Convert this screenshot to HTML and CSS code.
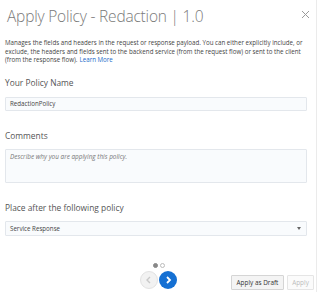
FILE: index.html
```html
<!DOCTYPE html>
<html lang="en">
<head>
  <meta charset="UTF-8" />
  <title>Apply Policy - Redaction</title>
  <link rel="stylesheet" href="styles.css">
</head>
<body>
  <div class="dialog">
    <div class="header">
      <h2>Apply Policy - Redaction | 1.0</h2>
      <svg class="close" width="9" height="9" viewBox="0 0 9 9"><path d="M1 1 L8 8 M8 1 L1 8" stroke="#9a9a9a" stroke-width="1"/></svg>
    </div>
    <p class="desc">Manages the fields and headers in the request or response payload. You can either explicitly include, or exclude, the headers and fields sent to the backend service (from the request flow) or sent to the client (from the response flow).<a href="#">Learn More</a></p>

    <div class="form-group first">
      <label>Your Policy Name</label>
      <div class="field">RedactionPolicy</div>
    </div>

    <div class="form-group">
      <label>Comments</label>
      <div class="field area">Describe why you are applying this policy.</div>
    </div>

    <div class="form-group">
      <label>Place after the following policy</label>
      <div class="field select">
        <span>Service Response</span>
        <span class="caret"></span>
      </div>
    </div>

    <div class="footer">
      <div class="pager">
        <div class="dots"><span class="dot on"></span><span class="dot"></span></div>
        <div class="arrows">
          <span class="nav prev">
            <svg width="8" height="8" viewBox="0 0 8 8"><path d="M5 1 L2 4 L5 7" fill="none" stroke="#c8c8c8" stroke-width="1.4"/></svg>
          </span>
          <span class="nav next">
            <svg width="8" height="8" viewBox="0 0 8 8"><path d="M3 1 L6 4 L3 7" fill="none" stroke="#fff" stroke-width="1.8"/></svg>
          </span>
        </div>
      </div>
      <div class="actions">
        <button class="button draft">Apply as Draft</button>
        <button class="button disabled">Apply</button>
      </div>
    </div>
  </div>
</body>
</html>
```

FILE: styles.css
```css
body {
  margin: 0;
  background-color: #fff;
  font-family: "Open Sans", "Noto Sans", sans-serif;
  color: #333;
}

.dialog {
  width: 317px;
  height: 292px;
  box-sizing: border-box;
  border-right: 1px solid #ebebeb;
  padding: 0 8px 0 5px;
}

.header {
  display: flex;
  justify-content: space-between;
  align-items: center;
  padding-top: 4px;
  height: 24px;
}

h2 {
  margin: 0 0 0 2px;
  font-size: 15.5px;
  font-weight: 300;
  color: #7a7a7a;
  letter-spacing: -0.2px;
}

.close {
  margin-right: -2px;
  margin-top: -3px;
}

.desc {
  margin: 11px 0 0;
  font-size: 6.2px;
  line-height: 8.7px;
  color: #444;
}

.desc a {
  margin-left: 2px;
  color: #1b6ac9;
  text-decoration: none;
}

.form-group {
  margin-top: 19px;
}

.form-group.first {
  margin-top: 12px;
}

.form-group label {
  display: block;
  font-size: 8.4px;
  line-height: 12px;
  color: #555;
  margin-bottom: 7px;
}

.form-group.first label {
  margin-bottom: 8px;
}

.field {
  height: 14px;
  box-sizing: border-box;
  border: 1px solid #e3e7ec;
  background-color: #f9fbfd;
  border-radius: 1px;
  font-size: 6.2px;
  line-height: 12px;
  padding: 0 4px;
  color: #444;
  margin-right: 1px;
}

.area {
  height: 34px;
  line-height: 14px;
  font-size: 6.4px;
  font-style: italic;
  color: #777;
}

.select {
  height: 15px;
  display: flex;
  justify-content: space-between;
  align-items: center;
}

.caret {
  width: 0;
  height: 0;
  margin-right: 1px;
  border-left: 2.5px solid transparent;
  border-right: 2.5px solid transparent;
  border-top: 3px solid #666;
}

.footer {
  position: relative;
  margin-top: 27px;
  height: 30px;
}

.pager {
  position: absolute;
  left: 135px;
  top: 0;
  width: 37px;
}

.dots {
  display: flex;
  justify-content: center;
  gap: 2px;
  height: 8px;
}

.dot {
  width: 5px;
  height: 5px;
  border-radius: 50%;
  box-sizing: border-box;
  border: 1px solid #bbb;
}

.dot.on {
  background-color: #888;
  border-color: #888;
}

.arrows {
  display: flex;
  gap: 1px;
}

.nav {
  width: 18px;
  height: 18px;
  border-radius: 50%;
  box-sizing: border-box;
  display: flex;
  justify-content: center;
  align-items: center;
}

.prev {
  background-color: #f2f2f2;
  border: 1px solid #e2e2e2;
}

.next {
  background-color: #1570d3;
}

.actions {
  position: absolute;
  right: -6px;
  top: 12px;
  display: flex;
  gap: 3px;
}

.button {
  height: 15px;
  padding: 0;
  border: 1px solid #d5d5d5;
  background-color: #f4f4f4;
  border-radius: 1px;
  font-family: inherit;
  font-size: 6.4px;
  color: #333;
}

.button.draft {
  width: 53px;
}

.button.disabled {
  width: 27px;
  color: #bbb;
  background-color: #fbfbfb;
  border-color: #e5e5e5;
}
```
